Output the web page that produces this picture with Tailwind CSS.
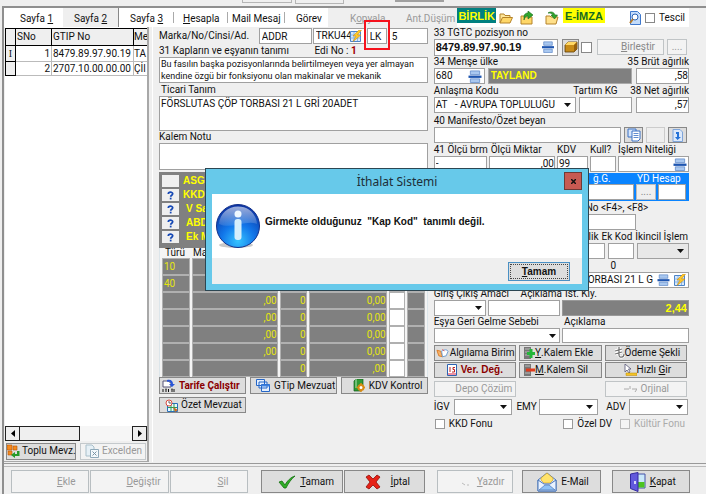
<!DOCTYPE html>
<html lang="tr">
<head>
<meta charset="utf-8">
<title>İthalat Sistemi</title>
<script src="https://cdn.jsdelivr.net/npm/@tailwindcss/browser@4"></script>
</head>
<body class="bg-white">
<svg class="hidden">
  <symbol id="arrow" viewBox="0 0 7 4"><path d="M0 0h7L3.500 4z" fill="#111"/></symbol>
  <symbol id="find" viewBox="0 0 14 14"><path d="M2 1h10v4H2z" fill="#a9c8f0" stroke="#5b86c8" stroke-width=".8"/><path d="M0 6h14v2.500H0z" fill="#1d55b0"/><path d="M2 9.500h10v4H2z" fill="#a9c8f0" stroke="#5b86c8" stroke-width=".8"/></symbol>
  <symbol id="flash" viewBox="0 0 12 12"><path d="M.5 1.500h10v10H.5z" fill="#d7e8fb" stroke="#4b84c9"/><path d="M.5 5h10M.5 8h10M4 2v9M7.500 2v9" stroke="#7aa8dd" stroke-width=".8"/><path d="M9 0L3 6h3L3 11.500 11 5H7.500L11.500 0z" fill="#ffc928" stroke="#c98708" stroke-width=".5"/></symbol>
  <symbol id="folder" viewBox="0 0 14 12"><path d="M1 11V2h4l1 1.500h5V6" fill="#ffe79a" stroke="#b5832a"/><path d="M1 11l2.500-5.500H13.500L11 11z" fill="#ffd768" stroke="#b5832a"/></symbol>
  <symbol id="q" viewBox="0 0 8 10"><path d="M1.500 3.200C1.500 .6 6.500 .6 6.500 3.100 6.500 4.700 4.200 4.600 4.200 6.500" fill="none" stroke="#1548b5" stroke-width="2"/><path d="M3.200 7.500h2V9.500h-2z" fill="#1548b5"/></symbol>
</svg>
<div class="relative mr-[5px] flex min-h-[494px] flex-col bg-[#efefef] font-['Roboto','Liberation_Sans',sans-serif] text-[10px] leading-[12px] text-[#111]">

  <div class="flex h-[6px] shrink-0 items-start gap-[3px] pl-[242px]">
    <div class="h-[3px] w-[50px] border border-t-0 border-[#b5b5b5]"></div>
    <div class="h-[4px] w-[49px] border border-t-0 border-[#b5b5b5]"></div>
    <div class="ml-12 h-[2px] w-[49px] bg-[#a0a0a0]"></div>
  </div>

  <div class="ml-[2px] flex flex-1 flex-col border-t-2 border-l-2 border-[#8f8f8f]">
    <nav class="mr-[17px] flex h-[19px] items-stretch bg-white whitespace-nowrap">
      <a href="#" class="w-[59px] shrink-0 pt-[5px] pl-4">Sayfa <u>1</u></a>
      <a href="#" class="w-[56px] shrink-0 border-r border-[#888] bg-[#efefef] pt-[5px] pl-[11px]">Sayfa <u>2</u></a>
      <a href="#" class="w-[54px] shrink-0 pt-[5px] pl-[11px]">Sayfa <u>3</u></a>
      <a href="#" class="my-1 w-[54px] shrink-0 border-l border-[#aaa] pt-px pl-[9px]"><u>H</u>esapla</a>
      <a href="#" class="my-1 w-[57px] shrink-0 border-l border-[#aaa] pt-px pl-1">Mail Mesaj</a>
      <a href="#" class="my-1 w-[44px] shrink-0 border-l border-[#aaa] pt-px pl-[11px]">Görev</a>
      <div class="flex flex-1 justify-between bg-[#efefef] pt-[5px] pr-[2px] pl-[22px] text-[#999]"><span>K<u>o</u>pyala</span><span>Ant.Düşüm</span></div>
      <button class="mb-1 h-[15px] bg-[#008080] px-px font-['Liberation_Sans'] text-[11px] leading-[14px] font-bold text-[#ff0]">BİRLİK</button>
      <button class="ml-[3px] w-[14px] shrink-0" aria-label="Aç"><svg class="h-3 w-[14px]"><use href="#folder"/></svg></button>
      <button class="ml-[7px] w-[14px] shrink-0" aria-label="Yukarı"><svg class="h-[14px] w-[14px]" viewBox="0 0 14 14"><path d="M1 13V5h4l1 1h6v7z" fill="#ffd768" stroke="#b5832a"/><path d="M4 5C5 2 7 2 8 2V0l5 4-5 4V5C6 5 5 6 4 9z" fill="#2fa52d" stroke="#146c17" stroke-width=".6"/></svg></button>
      <button class="ml-[11px] w-[14px] shrink-0" aria-label="İndir"><svg class="h-[14px] w-[14px]" viewBox="0 0 14 14"><path d="M1 13V5h4l1 1h7l-2 7z" fill="#ffe08a" stroke="#b5832a"/><path d="M3 2c3-2 6-1 7 2h2.500L9.500 8 6 4h2C7 2 5 2 3 2z" fill="#2fa52d" stroke="#146c17" stroke-width=".6"/></svg></button>
      <button class="ml-1 mb-1 h-[15px] bg-[#ff0] px-[2px] font-['Liberation_Sans'] text-[11px] leading-[14px] font-bold text-[#176b20]">E-İMZA</button>
      <button class="ml-6 w-3 shrink-0" aria-label="Önizle"><svg class="h-[14px] w-3" viewBox="0 0 12 14"><path d="M1.500 .5h7l3 3v10h-10z" fill="#c4dcfa" stroke="#3f78cc"/><circle cx="6" cy="6" r="3" fill="#fff" stroke="#2a62b5"/><path d="M4 8l-3 4" stroke="#b57b2b" stroke-width="2"/></svg></button>
      <label class="mr-1 ml-1 flex gap-1 pt-1"><input type="checkbox" class="mt-px h-[10px] w-[10px] appearance-none border border-[#888] bg-white">Tescil</label>
    </nav>

    <div class="grid flex-1 grid-cols-[145px_4px_minmax(0,271fr)_4px_minmax(0,252fr)_17px]">
      <aside class="flex flex-col border-r-2 border-b border-[#a8a8a8]">
        <div class="ml-px flex flex-1 flex-col bg-white pt-px">
          <table class="w-full table-fixed border-collapse whitespace-nowrap">
            <colgroup><col class="w-[10px]"><col class="w-9"><col class="w-[82px]"><col></colgroup>
            <thead class="bg-[#efefef] text-left"><tr class="h-[17px]"><th class="border border-black"></th><th class="border border-black pl-px font-normal">SNo</th><th class="border border-black pl-px font-normal">GTIP No</th><th class="overflow-hidden border border-r-0 border-black font-normal">Me</th></tr></thead>
            <tbody>
              <tr class="h-4"><td class="border border-black bg-[#efefef] text-center font-['Liberation_Serif']">I</td><td class="border border-[#bbb] pr-px text-right">1</td><td class="border border-[#bbb] pl-px">8479.89.97.90.19</td><td class="overflow-hidden border border-r-0 border-[#bbb]">TA</td></tr>
              <tr class="h-[14px]"><td class="border border-black bg-[#efefef]"></td><td class="border border-[#bbb] pr-px text-right">2</td><td class="border border-[#bbb] pl-px">2707.10.00.00.00</td><td class="overflow-hidden border border-r-0 border-[#bbb]">Çİl</td></tr>
            </tbody>
          </table>
          <div class="mt-auto flex h-[15px] bg-[#f6f6f6]">
            <button class="grid w-[15px] place-items-center border border-[#222] bg-[#efefef]" aria-label="Sola"><svg class="h-[7px] w-1" viewBox="0 0 4 7"><path d="M4 0v7L0 3.500z"/></svg></button>
            <div class="w-[60px] border border-l-0 border-[#222] bg-[#efefef]"></div>
            <button class="ml-auto grid w-[15px] place-items-center border border-[#222] bg-[#efefef]" aria-label="Sağa"><svg class="h-[7px] w-1" viewBox="0 0 4 7"><path d="M0 0v7l4-3.500z"/></svg></button>
          </div>
        </div>
        <div class="flex h-5 items-center gap-1 pl-[2px] whitespace-nowrap">
          <button class="flex h-[17px] w-[70px] items-center gap-[2px] border border-[#888] bg-[#ddd]"><svg class="h-[14px] w-[13px] shrink-0" viewBox="0 0 13 14"><path d="M0 1h5v5H0zM6 2h4v4H6zM1 7h4v4H1z" fill="#f58a1f" stroke="#b55406" stroke-width=".6"/><path d="M12.500 7v5H8v2L4 11l4-3v2h2V7z" fill="#279a2a"/></svg>Toplu Mevz.</button>
          <button disabled class="flex h-[17px] w-[66px] items-center gap-[3px] border border-[#c4c9cc] bg-[#f3f3f3] pl-1 text-[#999]"><svg class="h-[14px] w-[14px] shrink-0" viewBox="0 0 14 14"><path d="M1 1h6l2 2v9H1z" fill="#e6f0f6" stroke="#a9bfca"/><path d="M5.500 5.500h8v8h-8z" fill="#f4f9fc" stroke="#8fa9b9"/><path d="M7.500 7.500l4 4m0-4l-4 4" stroke="#7893a4"/></svg>Excelden</button>
        </div>
      </aside>
      <div class="border-r border-white"></div>

      <section class="flex flex-col pr-px pl-[6px]">
        <div class="mt-px flex h-4 items-center gap-px">
          <span class="mr-auto">Marka/No/Cinsi/Ad.</span>
          <input aria-label="Cinsi" value="ADDR" class="h-4 w-[53px] border border-[#a0a0a0] bg-white pl-[2px]">
          <div class="flex h-4 w-[52px] items-center border border-[#a0a0a0] bg-white pr-[2px]"><input aria-label="Adet" value="TRKU44" class="w-0 flex-1 pl-[2px]"><svg class="h-3 w-3"><use href="#flash"/></svg></div>
          <div class="relative flex w-[22px] pl-px"><input aria-label="Kap Kod" value="LK" class="h-4 w-5 border border-[#a0a0a0] bg-white pl-[2px]"><div class="absolute -top-2 -left-[2px] h-[30px] w-[26px] border-2 border-[#f5121d]"></div></div>
          <input aria-label="Kap adedi" value="5" class="h-4 w-[39px] border border-[#a0a0a0] bg-white pl-[2px]">
        </div>
        <div class="flex justify-between pt-px pr-[71px]"><label for="esya">31 Kapların ve eşyanın tanımı</label><span>Edi No : <b class="text-[#a00000]">1</b></span></div>
        <textarea id="esya" class="h-[26px] resize-none overflow-hidden border border-[#a0a0a0] bg-white pl-px text-[9px] leading-[12px] whitespace-pre">Bu fasılın başka pozisyonlarında belirtilmeyen veya yer almayan
kendine özgü bir fonksiyonu olan makinalar ve mekanik</textarea>
        <label for="ticari" class="pt-px pl-[2px]">Ticari Tanım</label>
        <textarea id="ticari" class="h-[35px] resize-none border border-[#a0a0a0] bg-white pt-px pl-px">FÖRSLUTAS ÇÖP TORBASI 21 L GRİ 20ADET</textarea>
        <label for="kalem">Kalem Notu</label>
        <textarea id="kalem" class="h-[27px] resize-none border border-[#a0a0a0] bg-white"></textarea>
        <div class="mt-[2px] flex h-[76px] flex-col gap-[2px] bg-[#808080] pt-[3px] pl-[3px] font-['Liberation_Sans'] font-bold text-[#ff0]">
          <div class="flex h-3 gap-1"><button class="w-[17px] bg-[#efefef]" aria-label="Seç"></button>ASGARİ</div>
          <div class="flex h-3 gap-1"><button class="grid w-[17px] place-items-center bg-[#efefef]" aria-label="KKDF bilgi"><svg class="h-[9px] w-[7px]"><use href="#q"/></svg></button>KKDF</div>
          <div class="flex h-3 gap-[7px]"><button class="grid w-[17px] place-items-center bg-[#efefef]" aria-label="Vergi bilgi"><svg class="h-[9px] w-[7px]"><use href="#q"/></svg></button>V Sayı</div>
          <div class="flex h-3 gap-[7px]"><button class="grid w-[17px] place-items-center bg-[#efefef]" aria-label="ABD bilgi"><svg class="h-[9px] w-[7px]"><use href="#q"/></svg></button>ABD</div>
          <div class="flex h-3 gap-[7px]"><button class="grid w-[17px] place-items-center bg-[#efefef]" aria-label="Ek mali bilgi"><svg class="h-[9px] w-[7px]"><use href="#q"/></svg></button>Ek Mali</div>
        </div>
        <table class="w-full table-fixed border-separate border-spacing-x-[2px] border-spacing-y-0 border-x border-[#dce5ea] bg-[#f4f4f4]">
          <colgroup><col class="w-7"><col><col class="w-[27px]"><col class="w-[78px]"><col class="w-4"><col class="w-[18px]"></colgroup>
          <thead><tr class="h-[10px] text-left leading-[10px]"><th class="pl-[3px] font-normal">Türü</th><th class="pl-px font-normal">Matrah</th><th></th><th></th><th></th><th></th></tr></thead>
          <tbody class="text-right text-[#e6e610]">
            <tr class="h-[17px]"><td class="border border-[#b0b0b0] bg-[#808080] pl-px text-left">10</td><td class="border border-[#b0b0b0] bg-[#808080]"></td><td class="border border-[#b0b0b0] bg-[#808080]"></td><td class="border border-[#b0b0b0] bg-[#808080]"></td><td class="border border-[#b0b0b0] bg-white"></td><td class="border border-[#b0b0b0] bg-[#808080]"></td></tr>
            <tr class="h-[17px]"><td class="border border-[#b0b0b0] bg-[#808080] pl-px text-left">40</td><td class="border border-[#b0b0b0] bg-[#808080]"></td><td class="border border-[#b0b0b0] bg-[#808080]"></td><td class="border border-[#b0b0b0] bg-[#808080]"></td><td class="border border-[#b0b0b0] bg-white"></td><td class="border border-[#b0b0b0] bg-[#808080]"></td></tr>
            <tr class="h-[17px]"><td class="border border-[#b0b0b0] bg-[#808080]"></td><td class="border border-[#b0b0b0] bg-[#808080]">,00</td><td class="border border-[#b0b0b0] bg-[#808080]">0</td><td class="border border-[#b0b0b0] bg-[#808080]">0,00</td><td class="border border-[#b0b0b0] bg-white"></td><td class="border border-[#b0b0b0] bg-[#808080]"></td></tr>
            <tr class="h-[17px]"><td class="border border-[#b0b0b0] bg-[#808080]"></td><td class="border border-[#b0b0b0] bg-[#808080]">,00</td><td class="border border-[#b0b0b0] bg-[#808080]">0</td><td class="border border-[#b0b0b0] bg-[#808080]">0,00</td><td class="border border-[#b0b0b0] bg-white"></td><td class="border border-[#b0b0b0] bg-[#808080]"></td></tr>
            <tr class="h-[17px]"><td class="border border-[#b0b0b0] bg-[#808080]"></td><td class="border border-[#b0b0b0] bg-[#808080]">,00</td><td class="border border-[#b0b0b0] bg-[#808080]">0</td><td class="border border-[#b0b0b0] bg-[#808080]">0,00</td><td class="border border-[#b0b0b0] bg-white"></td><td class="border border-[#b0b0b0] bg-[#808080]"></td></tr>
            <tr class="h-[17px]"><td class="border border-[#b0b0b0] bg-[#808080]"></td><td class="border border-[#b0b0b0] bg-[#808080]">,00</td><td class="border border-[#b0b0b0] bg-[#808080]">0</td><td class="border border-[#b0b0b0] bg-[#808080]">0,00</td><td class="border border-[#b0b0b0] bg-white"></td><td class="border border-[#b0b0b0] bg-[#808080]"></td></tr>
            <tr class="h-[17px]"><td class="border border-[#b0b0b0] bg-[#808080]"></td><td class="border border-[#b0b0b0] bg-[#808080]"></td><td class="border border-[#b0b0b0] bg-[#808080]">0</td><td class="border border-[#b0b0b0] bg-[#808080]">,00</td><td class="border border-[#b0b0b0] bg-white"></td><td class="border border-[#b0b0b0] bg-[#808080]"></td></tr>
          </tbody>
        </table>
        <div class="grid grid-cols-3 gap-x-1 gap-y-[3px] whitespace-nowrap">
          <button class="flex h-[17px] items-center gap-1 border border-[#888] bg-[#ddd] pl-[2px] font-bold text-[#8b0000]"><svg class="h-[14px] w-[13px] shrink-0" viewBox="0 0 13 14"><path d="M1 2h5l3 2v4H1z" fill="#fff" stroke="#557"/><path d="M5 1c4-1 6 1 6 4h2l-3 3-3-3h2C9 3 7 2 5 3z" fill="#2855d8"/><path d="M1 10v3M4 10v3M6.500 10v3M10 10v3M3.500 10h1M9.500 10h1M12 10v3" stroke="#111"/></svg>Tarife Çalıştır</button>
          <button class="flex h-[17px] items-center gap-1 border border-[#888] bg-[#ddd] pl-[5px]"><svg class="h-[13px] w-[14px] shrink-0" viewBox="0 0 14 13"><path d="M.5 .5h8v6h-8zM3 3h8v6H3zM5.500 5.500h8v7h-8z" fill="#e4effd" stroke="#2566c8"/><path d="M5.500 5.500h8v2h-8z" fill="#3f82e0"/></svg>GTip Mevzuat</button>
          <button class="flex h-[17px] items-center gap-1 border border-[#888] bg-[#ddd] pl-[11px]"><svg class="h-[13px] w-3 shrink-0" viewBox="0 0 12 13"><path d="M1 2l2-2h7v10l-2 2H1z" fill="#2f9a35" stroke="#145c1a" stroke-width=".7"/><path d="M3 0v9" stroke="#b7e5b9"/><circle cx="8" cy="8.500" r="2.500" fill="#fff" stroke="#d98b14" stroke-width="2"/><path d="M8 4v2M8 11v2M3.500 8.500h2M10.500 8.500h1.500" stroke="#d98b14" stroke-width="1.500"/></svg>KDV Kontrol</button>
          <button class="flex h-4 items-center gap-[3px] border border-[#888] bg-[#ddd] pl-[5px]"><svg class="h-[13px] w-[13px] shrink-0" viewBox="0 0 13 13"><path d="M2.500 4.500h10v8h-10z" fill="#e8f6ff" stroke="#2870bb"/><path d="M3 8.500h9M6 5v7M9 5v7" stroke="#2d9a50"/><circle cx="4" cy="4" r="3" fill="#fff" stroke="#d94c42"/><path d="M4 2v2h2" stroke="#666" fill="none"/><path d="M8 8l5 3-3 2z" fill="#c96a25"/></svg>Özet Mevzuat</button>
        </div>
      </section>
      <div></div>

      <section class="flex flex-col gap-px pl-px whitespace-nowrap">
        <div class="flex flex-col">
          <label for="tgtc">33 TGTC pozisyon no</label>
          <div class="flex h-4 items-center">
            <div class="flex h-[17px] flex-1 items-center border border-[#a0a0a0] bg-white pr-[2px]"><input id="tgtc" value="8479.89.97.90.19" class="w-0 flex-1 pl-px font-['Liberation_Sans'] text-[11px] font-bold"><svg class="h-3 w-[14px]"><use href="#find"/></svg></div>
            <button class="ml-1 grid h-[17px] w-[17px] place-items-center border border-[#888] bg-[#ddd]" aria-label="Paket"><svg class="h-3 w-[14px]" viewBox="0 0 14 12"><path d="M1 4l3-3h9v7l-3 3H1z" fill="#c78b18" stroke="#5e3e08" stroke-width=".8"/><path d="M1 4l3-3h9l-3 3z" fill="#ffd865"/><path d="M10 4v7l3-3V1z" fill="#96600e"/></svg></button>
            <input type="checkbox" aria-label="Seç" class="ml-[2px] h-[11px] w-[11px] appearance-none border border-[#888] bg-white">
            <button disabled class="ml-[5px] h-4 w-[67px] border border-[#c0c4c6] bg-[#f3f3f3] pl-[15px] text-[#888]"><u>B</u>irleştir</button>
            <button disabled class="mr-[2px] ml-[3px] h-4 w-5 border border-[#c0c4c6] bg-[#f3f3f3] text-[#999]">....</button>
          </div>
        </div>
        <div class="flex flex-col">
          <div class="flex justify-between"><label for="mense">34 Menşe ülke</label><label for="brut">35 Brüt ağırlık</label></div>
          <div class="flex h-4">
            <div class="flex w-[51px] items-center border border-[#a0a0a0] bg-white pr-[2px]"><input id="mense" value="680" class="w-0 flex-1 pl-px"><svg class="h-[13px] w-[14px]"><use href="#find"/></svg></div>
            <input aria-label="Ülke adı" value="TAYLAND" readonly class="ml-[3px] w-0 flex-1 border border-[#aaa] bg-[#808080] pl-[2px] font-['Liberation_Sans'] font-bold text-[#ff0]">
            <input id="brut" value=",58" class="ml-1 w-[53px] border border-[#a0a0a0] bg-white text-right">
          </div>
        </div>
        <div class="flex flex-col">
          <div class="flex"><label for="anl" class="flex-1">Anlaşma Kodu</label><label for="tartim" class="w-[57px]">Tartım KG</label><label for="net">38 Net ağırlık</label></div>
          <div class="flex h-4">
            <div class="relative flex flex-1"><select id="anl" class="w-0 flex-1 appearance-none border border-[#a0a0a0] bg-white pr-4 pl-px"><option>AT &nbsp; - AVRUPA TOPLULUĞU</option></select><svg class="pointer-events-none absolute top-[6px] right-[5px] h-1 w-[7px]"><use href="#arrow"/></svg></div>
            <input id="tartim" class="ml-[3px] w-[53px] border border-[#a0a0a0] bg-white">
            <input id="net" value=",57" class="ml-1 w-[53px] border border-[#a0a0a0] bg-white text-right">
          </div>
        </div>
        <div class="mt-px flex flex-col">
          <label for="ozet">40 Manifesto/Özet beyan</label>
          <div class="flex h-4 gap-[3px] pr-[2px]">
            <input id="ozet" class="w-0 flex-1 border border-[#a0a0a0] bg-white">
            <button class="grid w-[19px] place-items-center border border-[#888] bg-[#ddd]" aria-label="Liste"><svg class="h-[14px] w-[14px]" viewBox="0 0 14 14"><path d="M1 1h8v8H1z" fill="#d6e6fb" stroke="#3a70c4"/><path d="M5 3h8v8l-2 2H5z" fill="#fff" stroke="#3a70c4"/><path d="M6.500 5.500h5M6.500 7.500h5M6.500 9.500h5" stroke="#3a70c4" stroke-width=".8"/></svg></button>
            <button disabled class="w-[19px] border border-[#ccc] bg-[#efefef]" aria-label="Boş"></button>
            <button class="grid w-[19px] place-items-center border border-[#888] bg-[#ddd]" aria-label="Aktar"><svg class="h-[13px] w-[11px]" viewBox="0 0 11 13"><path d="M1 .5h7l2.500 2.500v9.500H1z" fill="#dce9fb" stroke="#7fa5da"/><path d="M4 3h3v5h2l-3.500 3L3 8h2V5H4z" fill="#2472d8"/></svg></button>
          </div>
        </div>
        <div class="grid grid-cols-[53px_minmax(0,1fr)_31px_26px_71px] grid-rows-[12px_16px] gap-x-[2px]">
          <label for="olcu">41 Ölçü brm</label><label for="miktar" class="pl-[2px]">Ölçü Miktar</label><label for="kdv">KDV</label><label for="kull">Kull?</label><label for="nitelik">İşlem Niteliği</label>
          <input id="olcu" value="-" class="border border-[#a0a0a0] bg-white pl-px"><input id="miktar" value=",00" class="border border-[#a0a0a0] bg-white text-right"><input id="kdv" value="99" class="border border-[#a0a0a0] bg-white pl-px"><input id="kull" class="border border-[#a0a0a0] bg-white">
          <div class="flex items-center border border-[#a0a0a0] bg-white pr-px"><input id="nitelik" class="w-0 flex-1"><svg class="h-[13px] w-[14px]"><use href="#find"/></svg></div>
        </div>
        <div class="flex h-7 flex-col bg-[#0a84ff] pr-[3px] text-white">
          <div class="flex h-[11px] justify-end"><label for="gider" class="w-[44px]">ğ.G.</label><label for="yd" class="w-[49px]">YD Hesap</label></div>
          <div class="flex h-4 gap-[2px]"><input id="gider" class="w-0 flex-1 border border-[#a0a0a0] bg-white"><button class="w-5 border border-[#bbb] bg-[#efefef] text-[#888]">....</button><input id="yd" class="w-7 border border-[#a0a0a0] bg-white"></div>
        </div>
        <div class="flex flex-col pr-[53px]"><label for="fno" class="pl-[152px]">No &lt;F4&gt;, &lt;F8&gt;</label><input id="fno" class="h-4 border border-[#a0a0a0] bg-white"></div>
        <div>
          <div class="flex justify-end gap-[3px] pr-px"><label for="ozellik">Özellik</label><label for="ekkod">Ek Kod</label><label for="ikincil">İkincil İşlem</label></div>
          <div class="grid h-4 grid-cols-[minmax(0,1fr)_26px_52px] gap-x-[3px]">
            <input id="ozellik" class="border border-[#a0a0a0] bg-white"><input id="ekkod" class="border border-[#a0a0a0] bg-white">
            <div class="relative flex"><select id="ikincil" class="w-full appearance-none border border-[#a0a0a0] bg-[#e8e8e8]"><option></option></select><svg class="pointer-events-none absolute top-[6px] right-[5px] h-1 w-[7px]"><use href="#arrow"/></svg></div>
          </div>
        </div>
        <div class="flex flex-col">
          <span class="pr-[73px] text-right">0</span>
          <div class="flex h-4 items-center gap-1 border border-[#a0a0a0] bg-white pr-[2px]"><input aria-label="Tanım" value="ÇÖP TORBASI 21 L G" class="w-0 flex-1 text-right"><svg class="h-3 w-[13px]"><use href="#find"/></svg><svg class="h-3 w-3"><use href="#flash"/></svg></div>
          <div class="flex"><div class="flex flex-1 justify-between"><label for="giris">Giriş Çıkış Amacı</label><label for="acik1">Açıklama</label></div><label for="kiy" class="w-[127px] pl-[3px]">İst. Kıy.</label></div>
          <div class="grid h-4 grid-cols-[52px_minmax(0,1fr)_127px] gap-x-[2px]">
            <div class="relative flex"><select id="giris" class="w-full appearance-none border border-[#a0a0a0] bg-white"><option></option></select><svg class="pointer-events-none absolute top-[6px] right-[4px] h-1 w-[7px]"><use href="#arrow"/></svg></div>
            <input id="acik1" class="border border-[#a0a0a0] bg-white"><input id="kiy" value="2,44" readonly class="border border-[#999] bg-[#808080] pr-px text-right font-['Liberation_Sans'] text-[11px] font-bold text-[#ff0]">
          </div>
          <div class="grid grid-cols-[minmax(0,1fr)_127px] grid-rows-[12px_15px] gap-x-[2px]">
            <label for="geri">Eşya Geri Gelme Sebebi</label><label for="acik2" class="pl-[2px]">Açıklama</label>
            <div class="relative flex"><select id="geri" class="w-full appearance-none border border-[#a0a0a0] bg-white"><option></option></select><svg class="pointer-events-none absolute top-[6px] right-[4px] h-1 w-[7px]"><use href="#arrow"/></svg></div>
            <input id="acik2" class="border border-[#a0a0a0] bg-white">
          </div>
        </div>
        <div class="mt-px grid grid-cols-3 gap-x-[3px] gap-y-px pr-[2px]">
          <button class="flex h-4 items-center gap-px border border-[#888] bg-[#ddd] pl-px"><svg class="h-[11px] w-[13px] shrink-0" viewBox="0 0 14 11"><path d="M1 2l4 1 2 6-4-1z" fill="#f7b46b" stroke="#db7a25"/><path d="M6 3c3-2 6-2 7 0l-2 5-4 1z" fill="#fff" stroke="#6b9ace"/><path d="M7 1l2 2" stroke="#e44" /></svg>Algılama Birim</button>
          <button class="flex h-4 items-center border border-[#888] bg-[#ddd] pl-1"><svg class="h-3 w-[11px] shrink-0" viewBox="0 0 11 12"><path d="M0 0h7v12H0z" fill="#777"/><path d="M1 2h5M1 5h5M1 8h5" stroke="#bbb"/><path d="M3 5h2.500V2h3v3H11v3H8.500v3h-3V8H3z" fill="#24b63a"/></svg><u>Y</u>.Kalem Ekle</button>
          <button class="flex h-4 items-center border border-[#888] bg-[#ddd] pl-2"><svg class="h-3 w-[11px] shrink-0" viewBox="0 0 11 12"><path d="M5 0v8c0 3 5 3 5-1M1 4l7-2M1 7l7-2" fill="none" stroke="#fff" stroke-width="3"/><path d="M5 0v8c0 3 5 3 5-1M1 4l7-2M1 7l7-2" fill="none" stroke="#777" stroke-width="1.300"/></svg>Ödeme Şekli</button>
          <button class="flex h-4 items-center justify-center gap-1 border border-[#888] bg-[#ddd] font-['Liberation_Sans'] font-bold text-[#8b0000]"><svg class="h-3 w-[10px] shrink-0" viewBox="0 0 10 12"><path d="M.5 .5h9v11h-9z" fill="#fff" stroke="#2d62b0"/><path d="M1 10h8" stroke="#d24"/><path d="M3 3v5M8 3.500H6v2h1.500V8H5" fill="none" stroke="#b22"/></svg>Ver. Değ.</button>
          <button class="flex h-4 items-center border border-[#888] bg-[#ddd] pl-1"><svg class="h-3 w-[11px] shrink-0" viewBox="0 0 11 12"><path d="M0 0h7v12H0z" fill="#777"/><path d="M1 2h5M1 9h5" stroke="#bbb"/><path d="M2 4.500h9v3H2z" fill="#e03a1c"/></svg><u>M</u>.Kalem Sil</button>
          <button class="flex h-4 items-center border border-[#888] bg-[#ddd] pl-[18px]"><svg class="h-3 w-[13px] shrink-0" viewBox="0 0 13 12"><path d="M1 0v8l2-2 2 3 1-1-1.500-3H7z" fill="#fff" stroke="#557" stroke-width=".8"/><path d="M2 9h11v2.500H2z" fill="#f4c326" stroke="#bb8b08" stroke-width=".5"/></svg><span>Hızlı <u>G</u>ir</span></button>
          <button disabled class="mt-[2px] h-4 border border-[#c0c4c6] bg-[#f3f3f3] pl-[18px] text-[#999]">Depo Çözüm</button>
          <div></div>
          <button disabled class="mt-[2px] flex h-4 items-center gap-1 border border-[#c0c4c6] bg-[#f3f3f3] pl-[18px] text-[#999]"><svg class="h-2 w-[13px] shrink-0" viewBox="0 0 13 8"><path d="M0 4h5M6 1v3M8 4h5l-2 3" fill="none" stroke="#aaa"/></svg>Orjinal</button>
        </div>
        <div class="mt-px flex h-4 items-center pr-px">
          <label for="igv" class="w-5">İGV</label><div class="relative flex h-full flex-1"><select id="igv" class="w-full appearance-none border border-[#a0a0a0] bg-white"><option></option></select><svg class="pointer-events-none absolute top-[6px] right-[5px] h-1 w-[7px]"><use href="#arrow"/></svg></div>
          <label for="emy" class="w-[27px] pl-1">EMY</label><div class="relative flex h-full flex-1"><select id="emy" class="w-full appearance-none border border-[#a0a0a0] bg-white"><option></option></select><svg class="pointer-events-none absolute top-[6px] right-[5px] h-1 w-[7px]"><use href="#arrow"/></svg></div>
          <label for="adv" class="w-[31px] pl-2">ADV</label><div class="relative flex h-full flex-1"><select id="adv" class="w-full appearance-none border border-[#a0a0a0] bg-white"><option></option></select><svg class="pointer-events-none absolute top-[6px] right-[5px] h-1 w-[7px]"><use href="#arrow"/></svg></div>
        </div>
        <div class="mt-[2px] flex items-center gap-2 pr-1 pl-px">
          <label class="mr-auto flex items-center gap-1"><input type="checkbox" class="h-[10px] w-[10px] appearance-none border border-[#999] bg-white">KKD Fonu</label>
          <label class="flex items-center gap-1"><input type="checkbox" class="h-[10px] w-[10px] appearance-none border border-[#999] bg-white">Özel DV</label>
          <label class="flex items-center gap-1 text-[#aaa]"><input type="checkbox" disabled class="h-[10px] w-[10px] appearance-none border border-[#bbb] bg-[#f5f5f5]">Kültür Fonu</label>
        </div>
      </section>
    </div>

    <footer class="mt-px border-t border-[#999] pt-[2px] whitespace-nowrap">
      <div class="flex gap-px border-t border-[#bbb] pt-[3px] pr-4 pb-px pl-[7px]">
        <button disabled class="h-[23px] grow basis-[70px] border border-[#b8bec1] bg-[#f3f3f3] pl-8 text-[#999]"><u>E</u>kle</button>
        <button disabled class="h-[23px] grow basis-[70px] border border-[#b8bec1] bg-[#f3f3f3] pl-7 text-[#999]"><u>D</u>eğiştir</button>
        <button disabled class="h-[23px] grow basis-[70px] border border-[#b8bec1] bg-[#f3f3f3] pl-7 text-[#999]"><u>S</u>il</button>
        <button class="ml-3 flex h-[23px] grow basis-[73px] items-center gap-1 border border-[#888] bg-[#ddd] pl-4"><svg class="h-[14px] w-[18px] shrink-0" viewBox="0 0 18 14"><path d="M1 7l3-1 3 4C9 6 13 2 17 1 13 4 10 9 8 13H6z" fill="#2fae26" stroke="#14700f" stroke-width=".8"/></svg><span><u>T</u>amam</span></button>
        <button class="flex h-[23px] grow basis-[73px] items-center gap-[10px] border border-[#888] bg-[#ddd] pl-5"><svg class="h-4 w-4 shrink-0" viewBox="0 0 16 16"><path d="M1 3l3-2 4 4 4-4 3 2-4 5 4 5-3 2-4-4-4 4-3-2 4-5z" fill="#e62217" stroke="#8f0f0a" stroke-width=".8"/></svg><span><u>İ</u>ptal</span></button>
        <button disabled class="ml-[11px] flex h-[23px] grow basis-[68px] items-center gap-2 border border-[#b8bec1] bg-[#f3f3f3] pl-6 text-[#999]"><svg class="h-2 w-[7px] shrink-0" viewBox="0 0 7 8"><path d="M0 5l3 2M5 7h2" stroke="#bbb"/></svg><span><u>Y</u>azdır</span></button>
        <button class="ml-2 flex h-[23px] grow basis-[70px] items-center gap-1 border border-[#888] bg-[#ddd] pl-[14px]"><svg class="h-5 w-5 shrink-0" viewBox="0 0 20 20"><path d="M1 8l9-7 9 7v11H1z" fill="#dfeafa" stroke="#4b76b8"/><path d="M4 6l6-5 6 5v2l-3 3H7L4 8z" fill="#ffe36b" stroke="#c99a1d" stroke-width=".6"/><path d="M1 8l6 4h6l6-4v11H1z" fill="#e8f2ff" stroke="#4b76b8"/><path d="M2 18l6-5h4l6 5z" fill="#8fc2f5" stroke="#4b76b8" stroke-width=".7"/></svg>E-Mail</button>
        <button class="ml-[10px] flex h-[23px] grow basis-[70px] items-center gap-1 border border-[#888] bg-[#ddd] pl-[17px]"><svg class="h-5 w-4 shrink-0" viewBox="0 0 16 20"><path d="M7 2h8v14H7z" fill="#c9e8fa" stroke="#4452a8"/><path d="M8 10h6.500v5.500H8z" fill="#4bc421"/><path d="M.5 2L8 .5v19L.5 16.500z" fill="#6159dc" stroke="#342ba0"/><path d="M5 9v3" stroke="#fff" stroke-width="1.500"/></svg><span><u>K</u>apat</span></button>
      </div>
    </footer>
  </div>

  <div role="dialog" aria-labelledby="dt" class="absolute top-[168px] left-[205px] flex w-[384px] flex-col border border-[#2c4652] bg-[#67c9ea] px-[6px] pb-[6px]">
    <div class="relative flex h-[25px] items-center justify-center">
      <h1 id="dt" class="font-['Noto_Sans'] text-xs text-[#1d2f38]">İthalat Sistemi</h1>
      <button aria-label="Kapat" class="absolute top-[3px] right-0 grid h-[18px] w-[18px] place-items-center border border-[#6e3a36] bg-[#c75a52]"><svg class="h-[5px] w-[5px]" viewBox="0 0 5 5"><path d="M0 0l5 5M5 0L0 5" stroke="#111" stroke-width="1.500"/></svg></button>
    </div>
    <div class="flex h-[64px] items-center gap-1 bg-white pl-[3px]">
      <svg class="h-[46px] w-[46px]" viewBox="0 0 46 46">
        <defs><radialGradient id="ball" cx=".5" cy=".85" r=".85"><stop offset="0" stop-color="#35c4ff"/><stop offset=".45" stop-color="#1277ea"/><stop offset="1" stop-color="#0b2f9e"/></radialGradient><linearGradient id="shine" x1="0" y1="0" x2="0" y2="1"><stop offset="0" stop-color="#fff" stop-opacity=".6"/><stop offset="1" stop-color="#fff" stop-opacity=".1"/></linearGradient></defs>
        <ellipse cx="21" cy="42" rx="17" ry="3" fill="#c9c9c9"/>
        <circle cx="23" cy="23" r="21.500" fill="url(#ball)" stroke="#12318c"/>
        <path d="M4 21C5 10 13 3.500 23 3.500S41 10 42 21C32 16 16 27 4 21z" fill="url(#shine)"/>
        <circle cx="23" cy="11" r="3.500" fill="#eef8ff"/><rect x="19.500" y="16" width="7" height="21" rx="3" fill="#d5effc"/>
      </svg>
      <p class="pb-2 font-['Liberation_Sans'] font-bold whitespace-pre">Girmekte olduğunuz  "Kap Kod"  tanımlı değil.</p>
    </div>
    <div class="flex h-[26px] items-center justify-end bg-[#efefef] pr-3">
      <button class="h-[19px] w-[62px] border border-[#4a90c4] bg-[#ddd] p-px"><span class="block border border-dotted border-[#444] font-['Liberation_Sans'] leading-[13px] font-bold"><u>T</u>amam</span></button>
    </div>
  </div>
</div>
</body>
</html>
